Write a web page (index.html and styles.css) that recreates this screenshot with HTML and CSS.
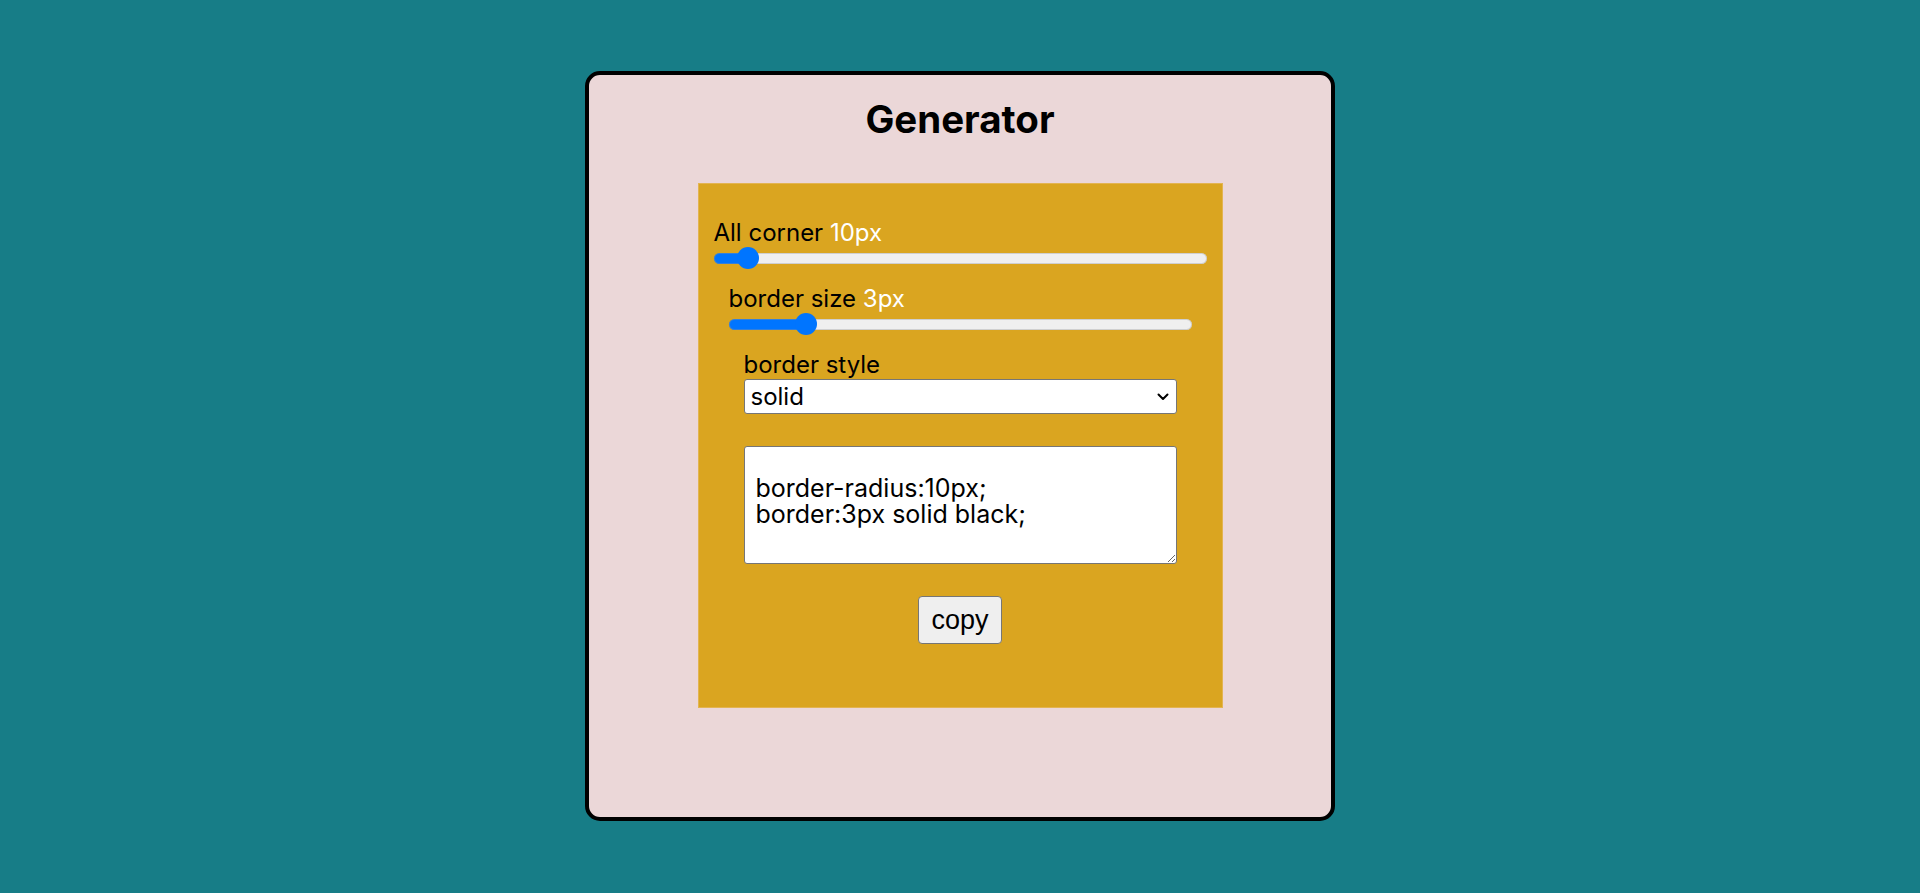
FILE: index.html
```html
<!DOCTYPE html>
<html lang="en">
<head>
<meta charset="utf-8">
<title>Generator</title>
<link rel="stylesheet" href="styles.css">
</head>
<body>
<div class="card">
  <h1 class="title">Generator</h1>
  <div class="panel">
    <div class="field field-1">
      <label class="label">All corner <span class="value">10px</span></label>
      <input class="range" type="range" min="0" max="200" value="10" style="--p:0.05">
      <div class="field field-2">
        <label class="label">border size <span class="value">3px</span></label>
        <input class="range" type="range" min="0" max="20" value="3" style="--p:0.15">
        <div class="field field-3">
          <label class="label">border style</label>
          <div class="select-wrap">
            <select class="select">
              <option>solid</option>
              <option>dashed</option>
              <option>dotted</option>
              <option>double</option>
            </select>
            <svg class="chevron" width="12" height="8" viewBox="0 0 12 8" aria-hidden="true"><path d="M1.5 1.5 L6 6 L10.5 1.5" fill="none" stroke="#000" stroke-width="2" stroke-linecap="round" stroke-linejoin="round"/></svg>
          </div>
          <textarea class="code">

border-radius:10px;
border:3px solid black;</textarea>
          <div class="actions">
            <button class="copy" type="button">copy</button>
          </div>
        </div>
      </div>
    </div>
  </div>
</div>
</body>
</html>
```
FILE: styles.css
```css
html, body {
  margin: 0;
  padding: 0;
}
body {
  background: #177d87;
  font-family: "Inter", "Noto Sans", sans-serif;
  color: #000;
  padding-top: 71px;
  height: 893px;
  box-sizing: border-box;
}
.card {
  box-sizing: border-box;
  width: 750px;
  height: 750px;
  margin: 0 auto;
  border: 4px solid #000;
  border-radius: 15px;
  background: #ebd7d8;
  padding-top: 22px;
}
.title {
  margin: 0 0 42px;
  font-size: 38.5px;
  line-height: 44px;
  font-weight: 700;
  text-align: center;
}
.panel {
  box-sizing: border-box;
  width: 525px;
  height: 525px;
  margin: 0 auto;
  background: #daa520;
  border: 1px solid #e3b451;
  padding: 35px 15px 0 15px;
}
.field {
  display: flex;
  flex-direction: column;
}
.field-2,
.field-3 {
  margin: 16px 15px 0 15px;
}
.label {
  font-size: 24px;
  line-height: 28px;
  display: block;
}
.value {
  color: #fff;
}
.range {
  -webkit-appearance: none;
  appearance: none;
  width: 100%;
  height: 22px;
  margin: 0;
  background: transparent;
  display: block;
}
.range::-webkit-slider-runnable-track {
  height: 11px;
  border-radius: 6px;
  background: linear-gradient(to right, #0075ff calc(11px + var(--p) * (100% - 22px)), #efefef 0);
  box-shadow: inset 0 0 0 1px rgba(150, 150, 150, 0.35);
}
.range::-webkit-slider-thumb {
  -webkit-appearance: none;
  appearance: none;
  width: 22px;
  height: 22px;
  border-radius: 50%;
  background: #0075ff;
  border: none;
  margin-top: -5.5px;
}
.select-wrap {
  position: relative;
}
.select {
  -webkit-appearance: none;
  appearance: none;
  box-sizing: border-box;
  width: 100%;
  height: 35px;
  margin: 0;
  font-family: inherit;
  font-size: 24px;
  color: #000;
  background: #fff;
  border: 1px solid #767676;
  border-radius: 3px;
  padding: 0 30px 0 6px;
  display: block;
}
.chevron {
  position: absolute;
  right: 8px;
  top: 14px;
  pointer-events: none;
}
.code {
  box-sizing: border-box;
  width: 100%;
  height: 118px;
  margin: 32px 0 0;
  font-family: inherit;
  font-size: 25px;
  line-height: 26.5px;
  color: #000;
  background: #fff;
  border: 1px solid #767676;
  border-radius: 3px;
  padding: 1px 11px;
  display: block;
  resize: vertical;
}
.actions {
  margin-top: 32px;
  display: flex;
  justify-content: center;
}
.copy {
  font-family: "Liberation Sans", Arial, sans-serif;
  font-size: 27px;
  line-height: 30px;
  height: 48px;
  padding: 0 12px;
  color: #000;
  background: #efefef;
  border: 1px solid #767676;
  border-radius: 4px;
}
```
